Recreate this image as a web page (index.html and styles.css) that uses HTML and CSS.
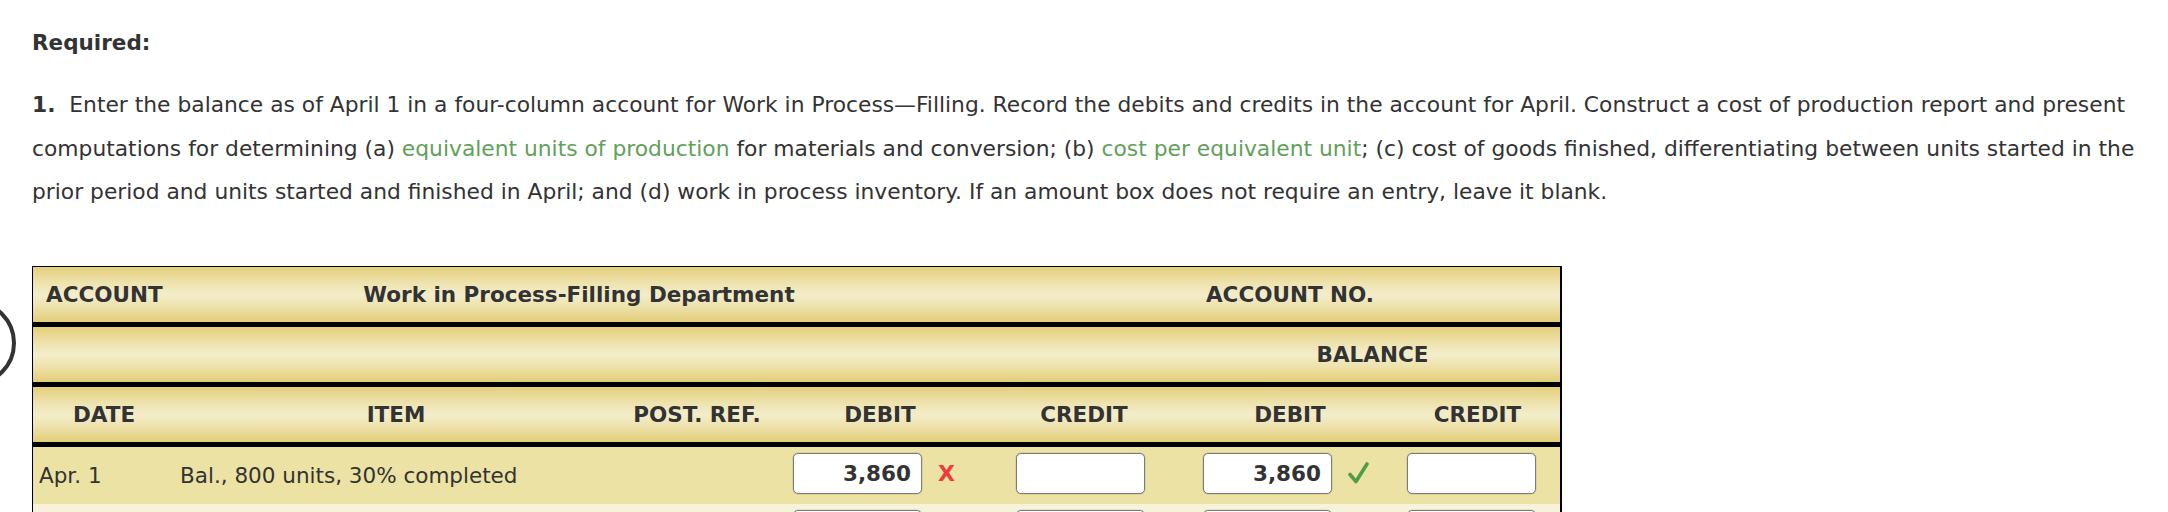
FILE: index.html
```html
<!DOCTYPE html>
<html lang="en">
<head>
<meta charset="utf-8">
<title>Work in Process - Filling</title>
<link rel="stylesheet" href="styles.css">
</head>
<body>
<div class="ring"></div>
<main class="content">
  <p class="required">Required:</p>
  <p class="task"><b>1.</b>&nbsp; Enter the balance as of April 1 in a four-column account for Work in Process—Filling. Record the debits and credits in the account for April. Construct a cost of production report and present computations for determining (a) <span class="term">equivalent units of production</span> for materials and conversion; (b) <span class="term">cost per equivalent unit</span>; (c) cost of goods finished, differentiating between units started in the prior period and units started and finished in April; and (d) work in process inventory. If an amount box does not require an entry, leave it blank.</p>

  <div class="ledger">
    <div class="row head">
      <div class="cell left">ACCOUNT</div>
      <div class="cell span-2-4">Work in Process-Filling Department</div>
      <div class="cell"></div>
      <div class="cell">ACCOUNT NO.</div>
      <div class="cell"></div>
    </div>
    <div class="sep"></div>
    <div class="row head">
      <div class="cell span-1-5"></div>
      <div class="cell span-6-7">BALANCE</div>
    </div>
    <div class="sep"></div>
    <div class="row head">
      <div class="cell">DATE</div>
      <div class="cell">ITEM</div>
      <div class="cell">POST. REF.</div>
      <div class="cell">DEBIT</div>
      <div class="cell">CREDIT</div>
      <div class="cell">DEBIT</div>
      <div class="cell">CREDIT</div>
    </div>
    <div class="sep"></div>
    <div class="row data">
      <div class="cell date">Apr. 1</div>
      <div class="cell item">Bal., 800 units, 30% completed</div>
      <div class="cell"></div>
      <div class="cell amt c-debit"><input class="box" type="text" value="3,860" readonly><span class="mark wrong">X</span></div>
      <div class="cell amt c-credit"><input class="box" type="text" value="" readonly></div>
      <div class="cell amt c-bdebit"><input class="box" type="text" value="3,860" readonly><span class="mark right"><svg width="21" height="22" viewBox="0 0 21 22"><path d="M2 12.5 L8 19.5 L19 2" fill="none" stroke="#4f9d4a" stroke-width="3.6" stroke-linecap="round" stroke-linejoin="round"/></svg></span></div>
      <div class="cell amt c-bcredit"><input class="box" type="text" value="" readonly></div>
    </div>
    <div class="row data alt">
      <div class="cell date"></div>
      <div class="cell item"></div>
      <div class="cell"></div>
      <div class="cell amt c-debit"><input class="box" type="text" value="" readonly></div>
      <div class="cell amt c-credit"><input class="box" type="text" value="" readonly></div>
      <div class="cell amt c-bdebit"><input class="box" type="text" value="" readonly></div>
      <div class="cell amt c-bcredit"><input class="box" type="text" value="" readonly></div>
    </div>
  </div>
</main>
</body>
</html>
```

FILE: styles.css
```css
html, body {
  margin: 0;
  padding: 0;
  overflow: hidden;
  background: #ffffff;
}

body {
  position: relative;
  font-family: "DejaVu Sans", Verdana, sans-serif;
  font-size: 21.5px;
  color: #333333;
}

.ring {
  position: absolute;
  left: -70px;
  top: 300px;
  width: 86px;
  height: 86px;
  box-sizing: border-box;
  border: 4px solid #333333;
  border-radius: 50%;
}

.content {
  padding: 0 32px;
}

.required {
  margin: 21px 0 0 0;
  line-height: 43px;
  font-weight: bold;
}

.task {
  margin: 19px 0 0 0;
  font-size: 21.8px;
  line-height: 43.5px;
}

.term {
  color: #62a05b;
}

.ledger {
  margin-top: 52px;
  width: 1527px;
  border: 1px solid #000000;
  border-right-width: 2px;
  border-bottom: none;
}

.row {
  display: grid;
  grid-template-columns: 142px 442px 160px 206px 202px 210px 165px;
}

.head {
  height: 55px;
  font-weight: bold;
  background: linear-gradient(180deg, #e3cf7a 0%, #eee2ac 28%, #f3edca 50%, #eee2ac 72%, #e2cd77 100%);
}

.head .cell {
  display: flex;
  align-items: center;
  justify-content: center;
  white-space: nowrap;
}

.head .cell.left {
  justify-content: flex-start;
  padding-left: 13px;
}

.span-2-4 {
  grid-column: 2 / 5;
}

.span-1-5 {
  grid-column: 1 / 6;
}

.span-6-7 {
  grid-column: 6 / 8;
}

.sep {
  height: 5px;
  background: #000000;
}

.data {
  height: 57px;
  background: #ece2a4;
}

.data.alt {
  background: #f6f3da;
}

.data .cell {
  display: flex;
  align-items: flex-start;
  padding-top: 6px;
  white-space: nowrap;
}

.data .cell.date,
.data .cell.item {
  align-items: center;
  padding-top: 0;
}

.data .cell.date {
  padding-left: 6px;
}

.data .cell.item {
  padding-left: 5px;
}

.c-debit { padding-left: 16px; }
.c-credit { padding-left: 33px; }
.c-bdebit { padding-left: 18px; }
.c-bcredit { padding-left: 12px; }

.box {
  box-sizing: border-box;
  width: 129px;
  height: 41px;
  margin: 0;
  padding: 0 10px 0 6px;
  border: 1px solid #7b7b7b;
  border-radius: 5px;
  background: #ffffff;
  box-shadow: 0 0 0 0.5px rgba(0, 0, 0, 0.15);
  font-family: "DejaVu Sans", Verdana, sans-serif;
  font-size: 21.5px;
  font-weight: bold;
  color: #333333;
  text-align: right;
  outline: none;
}

.mark {
  display: flex;
  align-items: center;
  height: 41px;
  padding-left: 16px;
}

.mark.wrong {
  color: #ee3b3b;
  font-family: "DejaVu Sans", sans-serif;
  font-weight: bold;
  font-size: 22px;
}
```
